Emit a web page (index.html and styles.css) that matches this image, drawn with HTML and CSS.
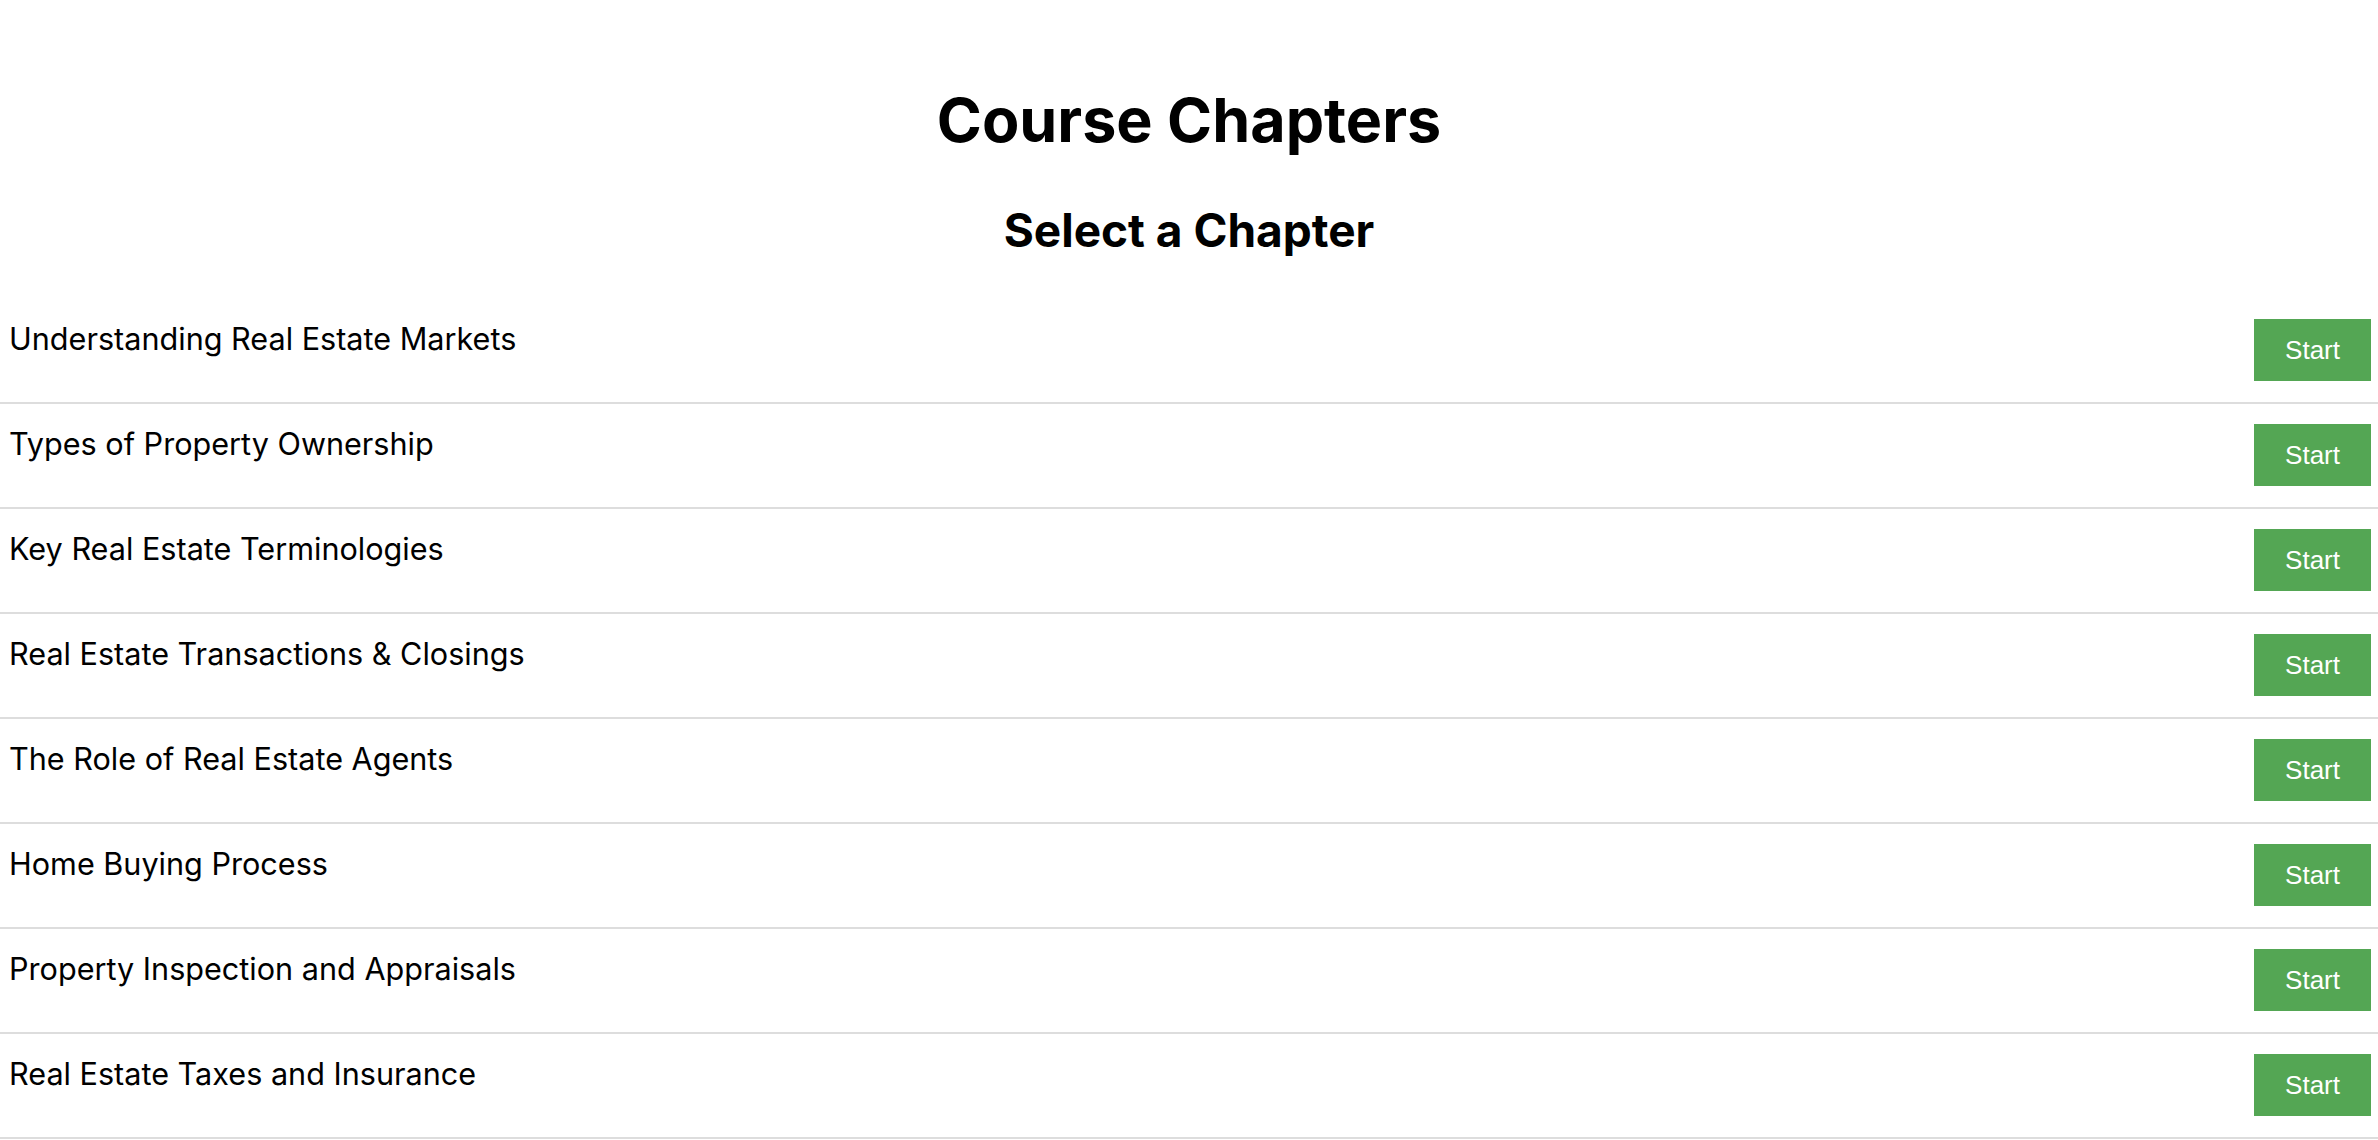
FILE: index.html
```html
<!DOCTYPE html>
<html lang="en">
<head>
<meta charset="utf-8">
<title>Course Chapters</title>
<link rel="stylesheet" href="styles.css">
</head>
<body>
<main class="page">
  <h1 class="title">Course Chapters</h1>
  <h2 class="subtitle">Select a Chapter</h2>
  <ul class="chapters">
    <li class="chapter"><span class="chapter-name">Understanding Real Estate Markets</span><button class="start">Start</button></li>
    <li class="chapter"><span class="chapter-name">Types of Property Ownership</span><button class="start">Start</button></li>
    <li class="chapter"><span class="chapter-name">Key Real Estate Terminologies</span><button class="start">Start</button></li>
    <li class="chapter"><span class="chapter-name">Real Estate Transactions &amp; Closings</span><button class="start">Start</button></li>
    <li class="chapter"><span class="chapter-name">The Role of Real Estate Agents</span><button class="start">Start</button></li>
    <li class="chapter"><span class="chapter-name">Home Buying Process</span><button class="start">Start</button></li>
    <li class="chapter"><span class="chapter-name">Property Inspection and Appraisals</span><button class="start">Start</button></li>
    <li class="chapter"><span class="chapter-name">Real Estate Taxes and Insurance</span><button class="start">Start</button></li>
  </ul>
</main>
</body>
</html>
```

FILE: styles.css
```css
html, body {
  margin: 0;
  padding: 0;
  background: #ffffff;
}

body {
  font-family: Inter, "Noto Sans", "Liberation Sans", sans-serif;
  color: #000000;
}

.page {
  display: flex;
  flex-direction: column;
}

.title {
  margin: 84px 0 0;
  font-size: 61px;
  font-weight: 700;
  text-align: center;
  line-height: 1.21;
}

.subtitle {
  margin: 45px 0 40.5px;
  font-size: 46px;
  font-weight: 700;
  text-align: center;
  line-height: 1.21;
}

.chapters {
  list-style: none;
  margin: 0;
  padding: 0;
}

.chapter {
  display: flex;
  justify-content: space-between;
  align-items: flex-start;
  padding: 20px 7px 21px 9px;
  border-bottom: 2px solid #dddddd;
}

.chapter-name {
  font-size: 30.6px;
  line-height: 1.21;
  padding-top: 1px;
}

.start {
  font-family: "Liberation Sans", Arial, sans-serif;
  font-size: 26px;
  line-height: 30px;
  padding: 16px 31px;
  border: none;
  border-radius: 0;
  background: #54a654;
  color: #ffffff;
  cursor: pointer;
}
```
